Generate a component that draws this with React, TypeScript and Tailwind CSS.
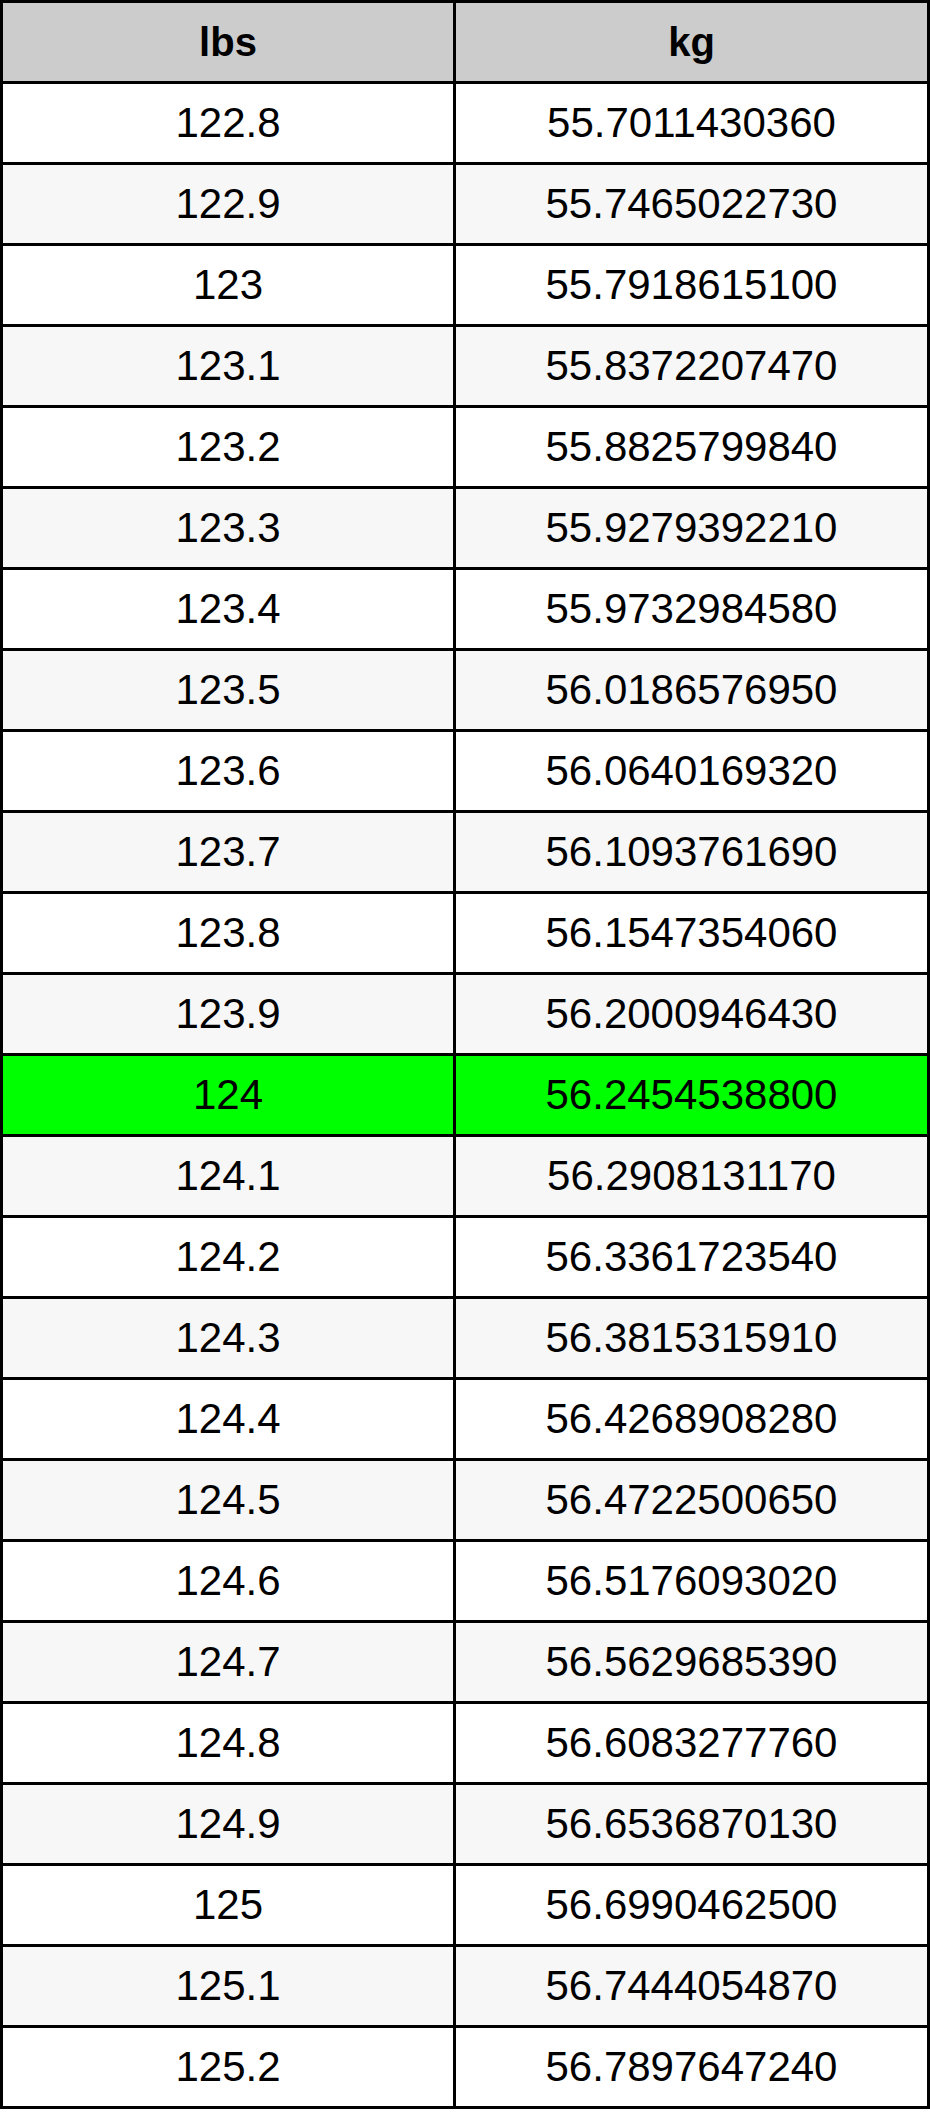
import React from "react";

const rows: [string, string][] = [
  ["122.8", "55.7011430360"],
  ["122.9", "55.7465022730"],
  ["123", "55.7918615100"],
  ["123.1", "55.8372207470"],
  ["123.2", "55.8825799840"],
  ["123.3", "55.9279392210"],
  ["123.4", "55.9732984580"],
  ["123.5", "56.0186576950"],
  ["123.6", "56.0640169320"],
  ["123.7", "56.1093761690"],
  ["123.8", "56.1547354060"],
  ["123.9", "56.2000946430"],
  ["124", "56.2454538800"],
  ["124.1", "56.2908131170"],
  ["124.2", "56.3361723540"],
  ["124.3", "56.3815315910"],
  ["124.4", "56.4268908280"],
  ["124.5", "56.4722500650"],
  ["124.6", "56.5176093020"],
  ["124.7", "56.5629685390"],
  ["124.8", "56.6083277760"],
  ["124.9", "56.6536870130"],
  ["125", "56.6990462500"],
  ["125.1", "56.7444054870"],
  ["125.2", "56.7897647240"],
];

export default function App() {
  return (
    <div className="w-[930px] bg-white font-['Liberation_Sans',Arial,sans-serif] text-black">
      <table className="w-[930px] border-collapse border-[3px] border-black text-center text-[42px] leading-none">
        <thead>
          <tr className="h-[81px] bg-[#cccccc]">
            <th className="w-[453px] border-[3px] border-black font-bold text-[40px]">lbs</th>
            <th className="border-[3px] border-black font-bold text-[40px]">kg</th>
          </tr>
        </thead>
        <tbody>
          {rows.map(([lbs, kg], i) => {
            const highlight = lbs === "124";
            const bg = highlight
              ? "bg-[#00ff00]"
              : i % 2 === 0
                ? "bg-white"
                : "bg-[#f7f7f7]";
            return (
              <tr key={lbs} className={`h-[81px] ${bg}`}>
                <td className="border-[3px] border-black">{lbs}</td>
                <td className="border-[3px] border-black">{kg}</td>
              </tr>
            );
          })}
        </tbody>
      </table>
    </div>
  );
}
